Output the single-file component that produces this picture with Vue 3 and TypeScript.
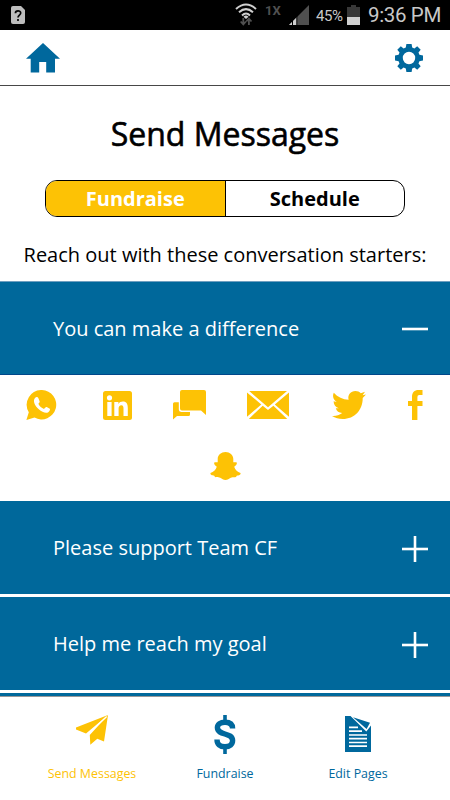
<script setup lang="ts">
import { ref } from 'vue'

type Tab = 'Fundraise' | 'Schedule'

const tabs: Tab[] = ['Fundraise', 'Schedule']
const activeTab = ref<Tab>('Fundraise')

const starters: string[] = [
  'You can make a difference',
  'Please support Team CF',
  'Help me reach my goal',
]
const openIndex = ref(0)

function toggle(index: number): void {
  openIndex.value = openIndex.value === index ? -1 : index
}
</script>

<template>
  <div class="screen">
    <div class="status">
      <svg class="sim" width="14" height="18" viewBox="0 0 14 18">
        <path d="M2 0H10L14 4V16Q14 18 12 18H2Q0 18 0 16V2Q0 0 2 0Z" fill="#bdbdbd" />
        <path d="M4.4 7.2C4.4 4 9.7 4 9.7 7.1C9.7 9.1 7 9.2 7 11.5M7 13.1V15" fill="none" stroke="#050505" stroke-width="1.7" />
      </svg>
      <svg class="wifi" width="22" height="24" viewBox="0 0 22 24">
        <g fill="none" stroke="#cfcfcf" stroke-width="2">
          <path d="M1 6Q11 -3 21 6" />
          <path d="M4 9.3Q11 3 18 9.3" />
          <path d="M7 12.4Q11 8.7 15 12.4" />
        </g>
        <path d="M8.5 13.7Q11 11.5 13.5 13.7L11 16Z" fill="#cfcfcf" />
        <path d="M8.3 15V21M5.7 18.5L8.3 21.5L10.9 18.5M13.9 22V16M11.3 18.5L13.9 15.5L16.5 18.5" fill="none" stroke="#505050" stroke-width="1.8" />
      </svg>
      <span class="network">1X</span>
      <svg class="signal" width="20" height="20" viewBox="0 0 20 20">
        <path d="M0 20L20 0V20Z" fill="#505050" />
        <path d="M0 20L8 12V20Z" fill="#cfcfcf" />
        <path d="M3.5 15V20M7.8 10V20" stroke="#000" stroke-width="1" />
      </svg>
      <span class="percent">45%</span>
      <svg class="battery" width="13" height="20" viewBox="0 0 13 20">
        <path d="M4 0H9V2H13V12H0V2H4Z" fill="#383838" />
        <path d="M0 12H13V20H0Z" fill="#d0d0d0" />
      </svg>
      <span class="clock">9:36 PM</span>
    </div>

    <header class="topbar">
      <svg width="34" height="30" viewBox="0 0 34 30">
        <path d="M17 0L34 15.7H29V29.5H20.2V19H13.2V29.5H4.7V15.7H0Z" fill="#00689d" />
      </svg>
      <svg width="28" height="28" viewBox="0 0 28 28">
        <path fill="#00689d" fill-rule="evenodd" d="M11.4 0H16.6L17.2 3.6L19.4 4.5L22.2 2.3L25.7 5.8L23.5 8.6L24.4 10.8L28 11.4V16.6L24.4 17.2L23.5 19.4L25.7 22.2L22.2 25.7L19.4 23.5L17.2 24.4L16.6 28H11.4L10.8 24.4L8.6 23.5L5.8 25.7L2.3 22.2L4.5 19.4L3.6 17.2L0 16.6V11.4L3.6 10.8L4.5 8.6L2.3 5.8L5.8 2.3L8.6 4.5L10.8 3.6ZM14 7.8A6.2 6.2 0 1 0 14 20.2A6.2 6.2 0 1 0 14 7.8Z" />
      </svg>
    </header>

    <main>
      <h1>Send Messages</h1>
      <div class="segmented">
        <button v-for="tab in tabs" :key="tab" :class="{ active: tab === activeTab }" @click="activeTab = tab">
          <span>{{ tab }}</span>
        </button>
      </div>
      <p class="intro">Reach out with these conversation starters:</p>

      <section v-for="(starter, index) in starters" :key="starter" class="starter">
        <button class="row" :class="{ open: openIndex === index }" @click="toggle(index)">
          <span>{{ starter }}</span>
          <svg width="26" height="26" viewBox="0 0 26 26" stroke="#fff" stroke-width="2.6">
            <path d="M0 13H26" />
            <path v-if="openIndex !== index" d="M13 0V26" />
          </svg>
        </button>
        <div v-if="openIndex === index" class="share">
          <div class="share-line">
            <svg class="whatsapp" width="31" height="30" viewBox="0 0 31 30">
              <path d="M16 0A14.7 14.7 0 1 1 8.5 27.6L.4 30L2.8 22.3A14.8 14.8 0 0 1 16 0Z" fill="#fdc205" />
              <path d="M8.8 8.2C10 6.8 11.7 6.7 12.3 8.1L13.6 11.2C13.9 12 13.2 12.8 12.3 13.8C13.6 16.3 15.5 18 18 19C19 18 19.7 16.7 20.7 17.1L23.8 18.8C24.4 19.3 23.8 21.3 22.3 22.2C19.9 23.5 16.1 22.2 12.8 19.3C9.2 16.1 6.5 11.5 8.8 8.2Z" fill="#fff" />
            </svg>
            <svg class="linkedin" width="29" height="29" viewBox="0 0 29 29">
              <rect width="29" height="29" rx="2.5" fill="#fdc205" />
              <g fill="#fff">
                <circle cx="6.5" cy="6.8" r="2.6" />
                <path d="M4.3 11H8.6V25H4.3ZM11.3 11H15.4V13C16.4 11.3 18 10.6 19.8 10.6C23.7 10.6 24.8 13.1 24.8 17V25H20.5V17.7C20.5 15.7 20.1 14.3 18.4 14.3C16.5 14.3 15.6 15.6 15.6 17.8V25H11.3Z" />
              </g>
            </svg>
            <svg class="chat" width="33" height="30" viewBox="0 0 33 30" fill="#fdc205">
              <path d="M9 0H31Q33 0 33 2V25L28 20.5H9Q7 20.5 7 18.5V2Q7 0 9 0Z" />
              <path d="M1.5 12.3H5.8V19.5Q5.8 21.9 8.2 21.9H17V24.5Q17 26 15.5 26H4L0 29.4V13.8Q0 12.3 1.5 12.3Z" />
            </svg>
            <svg class="mail" width="42" height="28" viewBox="0 0 42 28" fill="#fdc205">
              <path d="M2.2 0H40L21 16.3ZM0 1.4L14.3 13.5L0 25.8ZM42 1.4V25.8L27.8 13.5ZM15.7 14.7L21 19L26.4 14.7L40.3 28H1.8Z" />
            </svg>
            <svg class="twitter" width="34" height="28" viewBox="0 0 34 28">
              <path d="M1.8 1.7C5.7 6.1 10.8 8.5 16.6 8.7C15.4 3.6 18.8 0 23.4 0C25.6 0 27.5 .8 28.8 2.3L33 .8L30.6 4.3L34 3.4L30.7 7C30.9 18.8 22.7 28 10.7 28C6.8 28 3.2 27 0 25C4 25.3 7.2 24.2 10.2 22C6.9 21.8 4.7 20.1 3.8 17.2H6.8C3.7 16.2 1.6 13.7 1.6 10.2L4.7 11C1.3 8.5 .2 5.1 1.8 1.7Z" fill="#fdc205" />
            </svg>
            <svg class="facebook" width="15" height="30" viewBox="0 0 15 30">
              <path d="M14.5 0V5H11.2Q9.4 5 9.4 7V11H14.5V16H9.4V30H4V16H0V11H4V7C4 2.2 6.3 0 10.6 0Z" fill="#fdc205" />
            </svg>
          </div>
          <svg class="ghost" width="31" height="28" viewBox="0 0 31 28">
            <path d="M15.5 0C19.8 0 23.3 3 23.3 7.1V10.2C24.2 10.3 25.5 10 26.8 10.5C27.3 12 26 13.5 24.2 14.8C25.3 18.3 27.5 19.9 30.5 21.1C31 23 28.8 23.4 26.7 23.8C26.1 26.2 23 24.8 20.8 25.7C18.9 26.5 17.7 28 15.5 28C13.3 28 12.1 26.5 10.2 25.7C8 24.8 4.9 26.2 4.3 23.8C2.2 23.4 0 23 .5 21.1C3.5 19.9 5.7 18.3 6.8 14.8C5 13.5 3.7 12 4.2 10.5C5.5 10 6.8 10.3 7.7 10.2V7.1C7.7 3 11.2 0 15.5 0Z" fill="#fdc205" />
          </svg>
        </div>
      </section>
      <div class="next-row"></div>
    </main>

    <nav class="bottom">
      <a class="current">
        <svg width="32" height="30" viewBox="0 0 32 30" fill="#fdc205">
          <path d="M32 0L0 12.6V14.6L10 18.5Z" />
          <path d="M32 0L28 26.4L21.3 23.8L14.3 29.7L13.8 20Z" />
          <path d="M30.5 1.8L11.8 19.4" stroke="#fff" stroke-width="1.3" />
        </svg>
        <span>Send Messages</span>
      </a>
      <a>
        <svg width="22" height="39" viewBox="0 0 22 39" fill="none" stroke="#00689d">
          <path d="M11 0V6M11 32V39" stroke-width="3.6" />
          <path d="M18.6 13.5C18.6 9.2 15.7 7.2 11 7.2C6.3 7.2 3.4 9.2 3.4 12.6C3.4 21 18.6 17 18.6 25.6C18.6 29.4 15.7 31.8 11 31.8C5.9 31.8 3 29.3 3 24.6" stroke-width="5.4" />
        </svg>
        <span>Fundraise</span>
      </a>
      <a class="edit">
        <svg width="26" height="36" viewBox="0 0 26 36">
          <path d="M0 0H5.5L21.3 15.5L26 9.6V36H0Z" fill="#00689d" />
          <path d="M8 1.2L25 6.7L21.6 13Z" fill="#00689d" />
          <path d="M4 11.3H13M4 15.2H17M4 19H22M4 22.7H22M4 26.5H22M4 30.2H22" stroke="#fff" stroke-width="1.7" />
        </svg>
        <span>Edit Pages</span>
      </a>
    </nav>
  </div>
</template>

<style>
body {
  margin: 0;
  background: #fff;
}
</style>

<style scoped>
.screen {
  display: flex;
  flex-direction: column;
  width: 450px;
  height: 800px;
  overflow: hidden;
  background: #fff;
  color: #000;
  font-family: 'Open Sans', 'Noto Sans', sans-serif;
}

svg {
  display: block;
  flex: none;
}

button {
  margin: 0;
  padding: 0;
  border: 0;
  background: none;
  color: inherit;
  font: inherit;
}

.status {
  display: flex;
  align-items: flex-start;
  box-sizing: border-box;
  height: 30px;
  flex: none;
  padding-left: 11px;
  background: #000;
  color: #c8c8c8;
  font-family: Roboto, sans-serif;
  white-space: nowrap;
}

.sim {
  margin-top: 6px;
}

.wifi {
  margin: 3px 0 0 210px;
}

.network {
  width: 17px;
  margin: 3px 0 0 8px;
  color: #505050;
  font-size: 13px;
  font-weight: 700;
  line-height: 15px;
}

.signal {
  margin: 5px 0 0 7px;
}

.percent {
  width: 28px;
  margin: 7px 0 0 7px;
  font-size: 15px;
  line-height: 18px;
  letter-spacing: -0.4px;
}

.battery {
  margin: 5px 0 0 3px;
}

.clock {
  margin: 3px 0 0 8px;
  font-size: 20.5px;
  line-height: 25px;
  letter-spacing: -0.35px;
}

.topbar {
  display: flex;
  align-items: center;
  justify-content: space-between;
  box-sizing: border-box;
  height: 56px;
  flex: none;
  padding: 0 27px 0 26px;
  border-bottom: 1px solid #484848;
}

main {
  display: flex;
  flex-direction: column;
  height: 611px;
  flex: none;
}

h1 {
  margin: 26px 0 0;
  font-size: 32px;
  font-weight: 400;
  line-height: 44px;
  text-align: center;
  -webkit-text-stroke: 0.6px #000;
}

.segmented {
  display: flex;
  box-sizing: border-box;
  width: 360px;
  height: 37px;
  flex: none;
  margin: 24px auto 0;
  overflow: hidden;
  border: 1px solid #000;
  border-radius: 12px;
}

.segmented button {
  flex: 1;
  font-size: 20px;
  font-weight: 700;
  line-height: 34px;
}

.segmented button + button {
  border-left: 1px solid #000;
}

.segmented .active {
  background: #fdc205;
  color: #fff;
}

.intro {
  margin: 24px 0 0;
  font-size: 20px;
  line-height: 28px;
  text-align: center;
  white-space: nowrap;
}

.intro + .starter {
  margin-top: 12px;
}

.starter + .starter {
  margin-bottom: 3px;
}

.row {
  display: flex;
  align-items: center;
  justify-content: space-between;
  box-sizing: border-box;
  width: 100%;
  height: 94px;
  padding: 2px 22px 0 53px;
  background: #00689b;
  color: #fff;
  font-size: 20px;
  text-align: left;
}

.row span {
  padding-bottom: 2px;
}

.row.open {
  box-shadow: inset 0 1px #6f9fc0, inset 0 -1px #00478a;
}

.share {
  box-sizing: border-box;
  height: 126px;
  padding: 15px 0 0 26px;
}

.share-line {
  display: flex;
  align-items: center;
  height: 30px;
}

.linkedin {
  margin-left: 46px;
}

.chat,
.mail {
  margin-left: 41px;
}

.twitter {
  margin-left: 43px;
}

.facebook {
  margin-left: 42px;
}

.ghost {
  margin: 32px 0 0 184px;
}

.starter + .starter .row {
  height: 93px;
}

.next-row {
  height: 4px;
  background: #00689b;
  border-bottom: 1px solid #999;
  box-sizing: border-box;
}

.bottom {
  display: grid;
  grid-template-columns: 184px 82px 184px;
  height: 103px;
  flex: none;
  color: #00689d;
  font-size: 12.4px;
}

.bottom a {
  display: flex;
  flex-direction: column;
  align-items: center;
  justify-content: space-between;
  box-sizing: border-box;
  height: 85px;
  padding-top: 18px;
  line-height: 16px;
}

.bottom .edit {
  padding-top: 19px;
}

.bottom .current {
  color: #fdc205;
}
</style>
